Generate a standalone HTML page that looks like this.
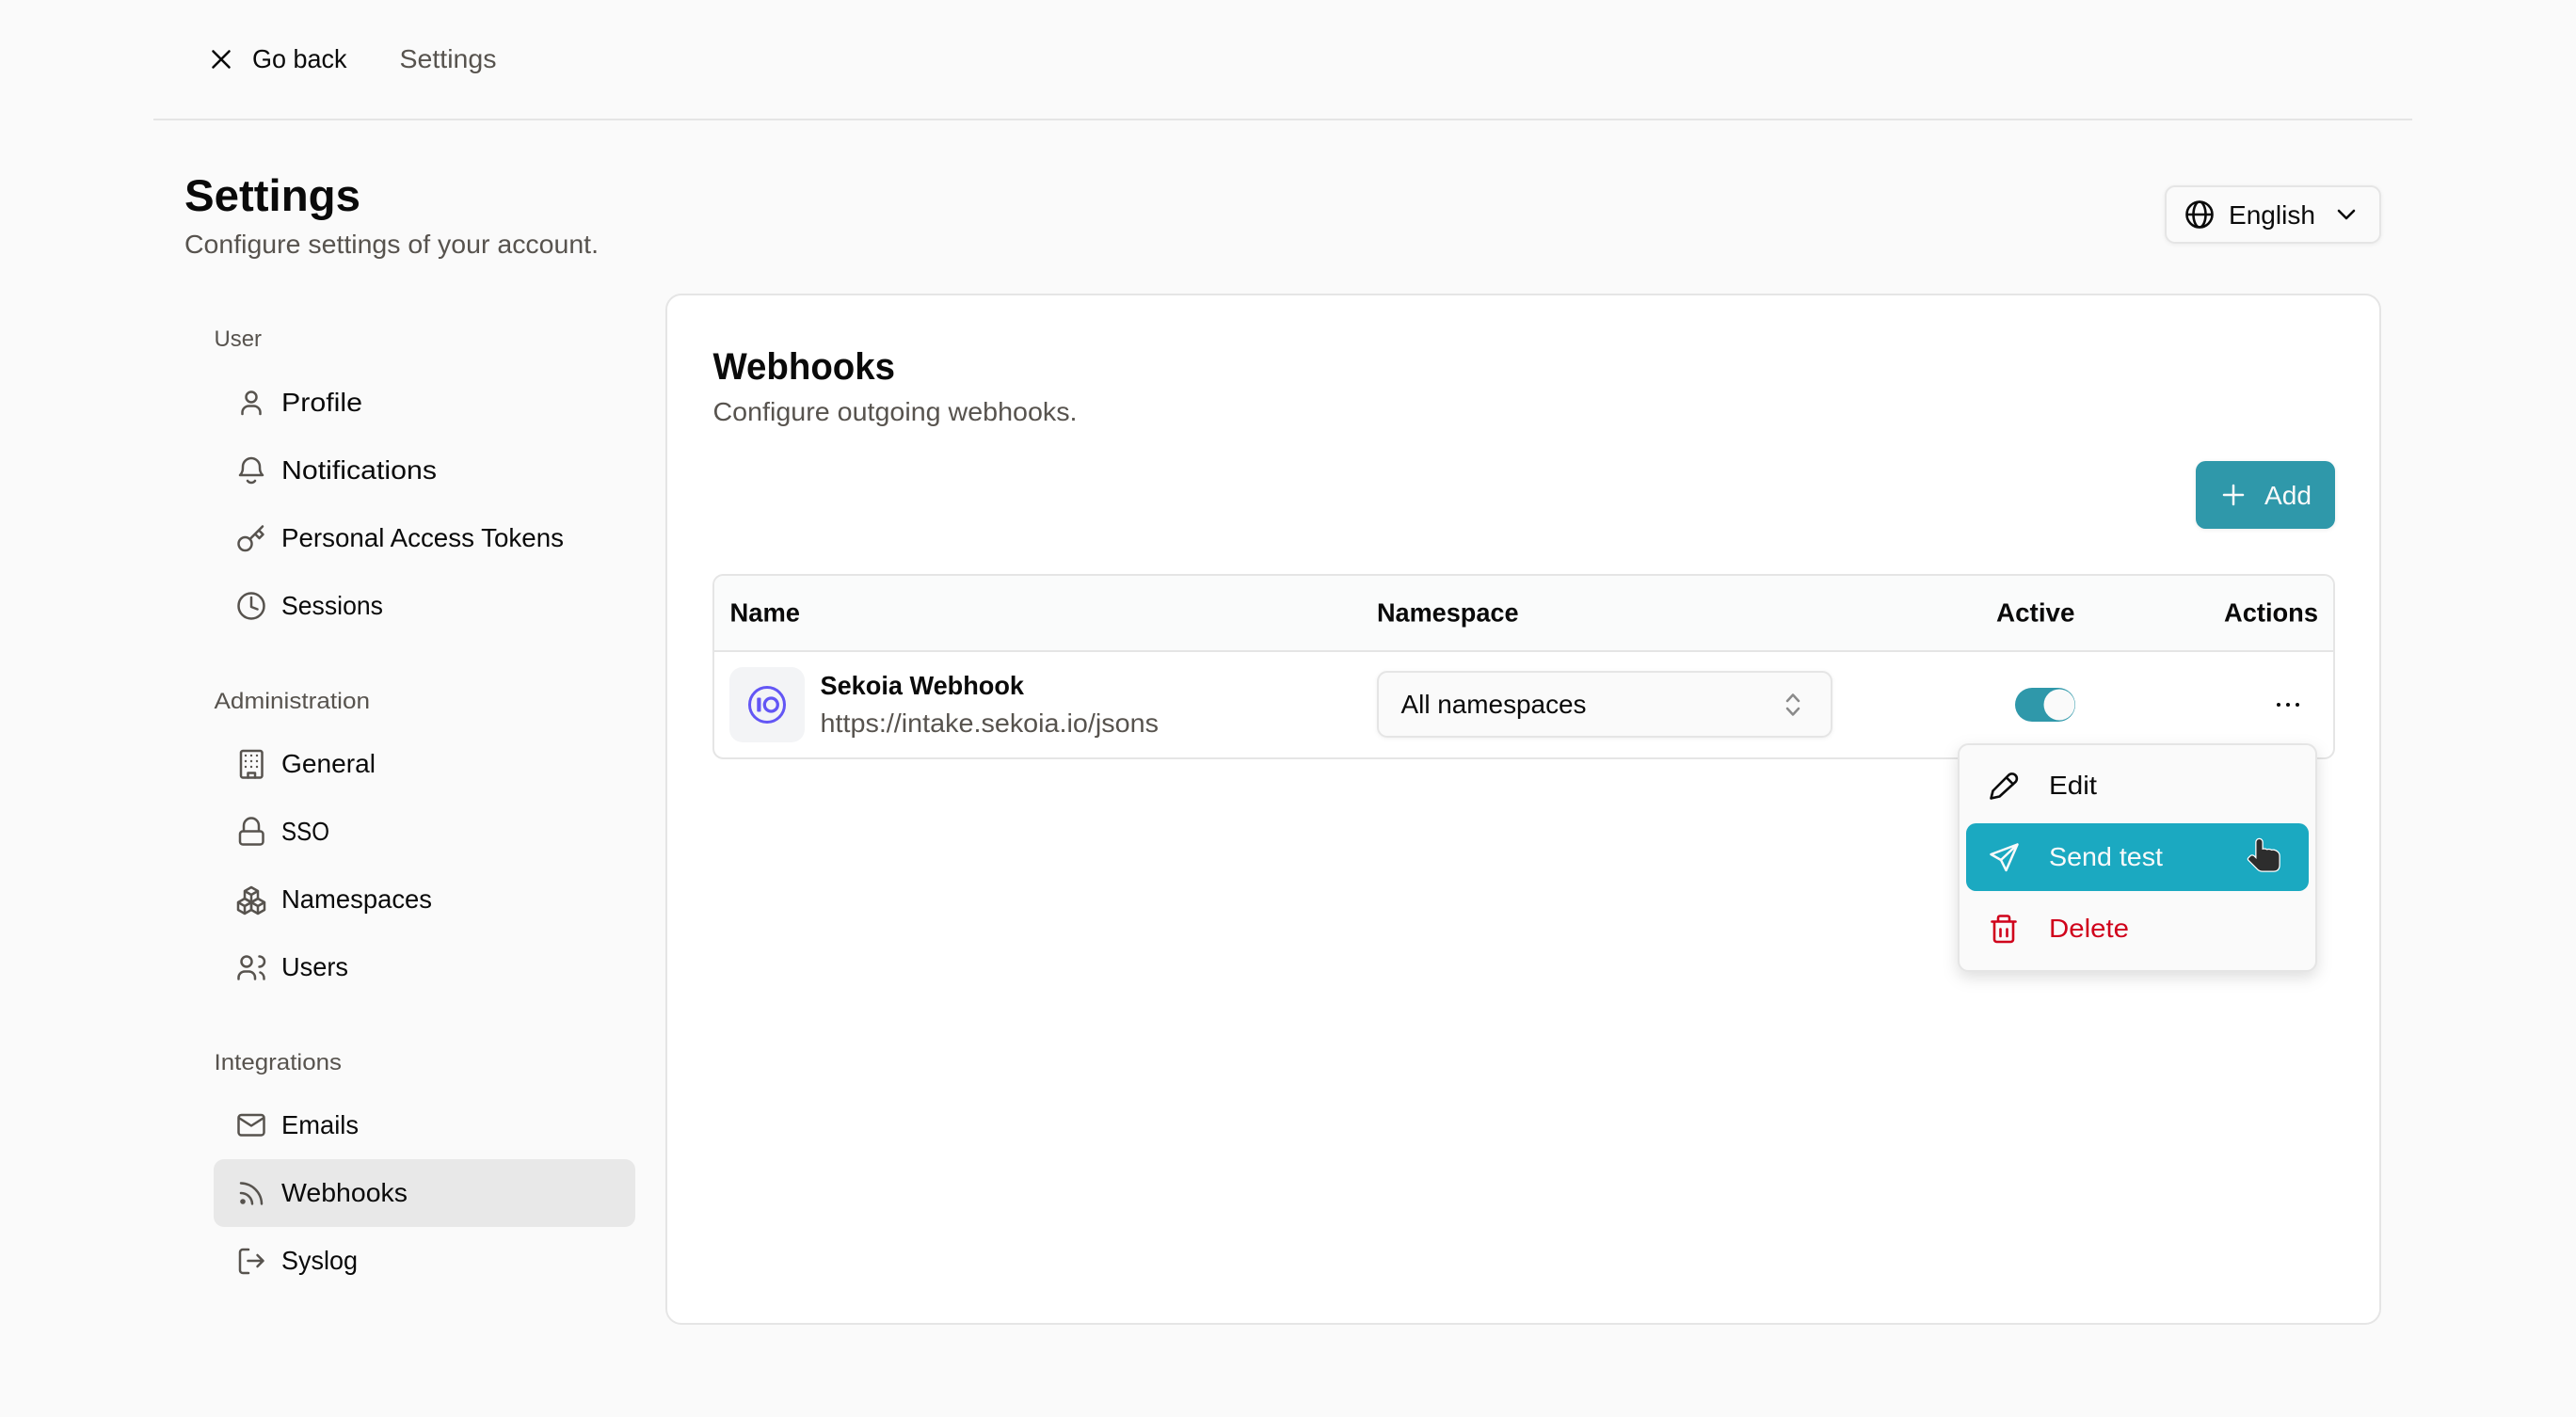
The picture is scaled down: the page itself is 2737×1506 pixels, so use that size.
<!DOCTYPE html>
<html lang="en">
<head>
<meta charset="utf-8">
<title>Settings</title>
<style>
html,body{margin:0;padding:0;background:#fafafa;width:2737px;height:1506px;overflow:hidden}
svg{display:block}
text{font-family:"Liberation Sans",sans-serif;font-size:27.5px;fill:#0a0a0a;white-space:pre}
.s{fill:#57534e}
.l{font-size:24.5px;fill:#57534e}
.b{font-weight:700}
.i{fill:none;stroke:#57534e;stroke-width:2.5;stroke-linecap:round;stroke-linejoin:round}
.k{fill:none;stroke:#0a0a0a;stroke-width:2.6;stroke-linecap:round;stroke-linejoin:round}
</style>
</head>
<body>
<svg xmlns="http://www.w3.org/2000/svg" width="2737" height="1506" viewBox="0 0 2737 1506">
<rect width="2737" height="1506" fill="#fafafa"/>

<!-- Top bar -->
<path class="k" d="M226.500 54.500L243.500 71.500M243.500 54.500L226.500 71.500"/>
<text x="268" y="72" textLength="100.500" lengthAdjust="spacingAndGlyphs">Go back</text>
<text class="s" x="424.500" y="72" textLength="103" lengthAdjust="spacingAndGlyphs">Settings</text>
<rect x="163" y="126" width="2400" height="2" fill="#e5e5e5"/>

<!-- Title -->
<text class="b" x="196" y="224" style="font-size:47px" textLength="187" lengthAdjust="spacingAndGlyphs">Settings</text>
<text class="s" x="196" y="269" textLength="440" lengthAdjust="spacingAndGlyphs">Configure settings of your account.</text>

<!-- Language -->
<rect x="2301" y="198" width="228" height="60" rx="10" fill="#fafafa" stroke="#e5e5e5" stroke-width="2" style="filter:drop-shadow(0 1px 2px rgba(0,0,0,.06))"/>
<g class="k"><circle cx="2337" cy="228" r="13.500"/><ellipse cx="2337" cy="228" rx="6.500" ry="13.500"/><path d="M2324 228H2350"/></g>
<text x="2368" y="238" textLength="92" lengthAdjust="spacingAndGlyphs">English</text>
<path class="k" d="M2485 224L2493 232L2501 224"/>

<!-- Sidebar -->
<text class="l" x="227.500" y="368" textLength="50.500" lengthAdjust="spacingAndGlyphs">User</text>
<text x="299" y="437" textLength="86" lengthAdjust="spacingAndGlyphs">Profile</text>
<text x="299" y="509" textLength="165" lengthAdjust="spacingAndGlyphs">Notifications</text>
<text x="299" y="581" textLength="300" lengthAdjust="spacingAndGlyphs">Personal Access Tokens</text>
<text x="299" y="653" textLength="108" lengthAdjust="spacingAndGlyphs">Sessions</text>

<text class="l" x="227.500" y="753" textLength="165.500" lengthAdjust="spacingAndGlyphs">Administration</text>
<text x="299" y="821" textLength="100" lengthAdjust="spacingAndGlyphs">General</text>
<text x="299" y="893" textLength="51" lengthAdjust="spacingAndGlyphs">SSO</text>
<text x="299" y="965" textLength="160" lengthAdjust="spacingAndGlyphs">Namespaces</text>
<text x="299" y="1037" textLength="71" lengthAdjust="spacingAndGlyphs">Users</text>

<text class="l" x="227.500" y="1137" textLength="135.500" lengthAdjust="spacingAndGlyphs">Integrations</text>
<rect x="227" y="1232" width="448" height="72" rx="11" fill="#e8e8e8"/>
<text x="299" y="1205" textLength="82" lengthAdjust="spacingAndGlyphs">Emails</text>
<text x="299" y="1277" textLength="134" lengthAdjust="spacingAndGlyphs">Webhooks</text>
<text x="299" y="1349" textLength="81" lengthAdjust="spacingAndGlyphs">Syslog</text>

<!-- Sidebar icons -->
<g class="i">
  <!-- user -->
  <circle cx="267" cy="422" r="5.500"/>
  <path d="M257.500 440V438.500A7 7 0 0 1 264.500 431.500H269.500A7 7 0 0 1 276.500 438.500V440"/>
  <!-- bell -->
  <path d="M255 505C258 502 258 499 258 496A9 9 0 0 1 276 496C276 499 276 502 279 505H255Z"/>
  <path d="M263 511A5 5 0 0 0 271 511"/>
  <!-- key -->
  <circle cx="260.500" cy="578" r="7"/>
  <path d="M265.500 573L279 559.500M271 567.500L275.500 572L279.500 568L275 563.500"/>
  <!-- clock -->
  <circle cx="267" cy="644" r="13.500"/>
  <path d="M267 635V645L273.500 647.500"/>
  <!-- building -->
  <rect x="256" y="798" width="22.500" height="28.500" rx="2"/>
  <path d="M263.500 826.500V821.500H271V826.500"/>
  <!-- lock -->
  <rect x="255" y="883.500" width="24.500" height="14" rx="3"/>
  <path d="M259 883V877.500A8 8 0 0 1 275 877.500V883"/>
  <!-- namespaces -->
  <path d="M267 943L274 947V955L267 959L260 955V947ZM260 947L267 951L274 947M267 951V959"/>
  <path d="M260 955L267 959V967L260 971L253 967V959ZM253 959L260 963L267 959M260 963V971"/>
  <path d="M274 955L281 959V967L274 971L267 967V959ZM267 959L274 963L281 959M274 963V971"/>
  <!-- users -->
  <circle cx="262" cy="1022" r="5.500"/>
  <path d="M253.500 1040.500V1039A6.500 6.500 0 0 1 260 1032.500H264.500A6.500 6.500 0 0 1 271 1039V1040.500"/>
  <path d="M275.500 1016.500A5.500 5.500 0 0 1 275.500 1027.500M280.500 1040.500V1039.500A6.500 6.500 0 0 0 276.500 1033.500"/>
  <!-- mail -->
  <rect x="253.500" y="1185" width="27" height="21.500" rx="3"/>
  <path d="M254.500 1188.500L267 1196.500L279.500 1188.500"/>
  <!-- rss -->
  <path d="M256 1268A12 12 0 0 1 268 1279.500M256 1257.500A22.500 22.500 0 0 1 278 1279.500"/>
  <!-- logout -->
  <path d="M264 1328H258A3 3 0 0 0 255 1331V1350A3 3 0 0 0 258 1353H264"/>
  <path d="M263.500 1340H279.500M273.500 1334L279.500 1340L273.500 1346"/>
</g>
<circle cx="258" cy="1277" r="2.800" fill="#57534e"/>
<g fill="#57534e">
  <circle cx="261" cy="803" r="1.200"/><circle cx="267" cy="803" r="1.200"/><circle cx="273" cy="803" r="1.200"/>
  <circle cx="261" cy="809" r="1.200"/><circle cx="267" cy="809" r="1.200"/><circle cx="273" cy="809" r="1.200"/>
  <circle cx="261" cy="815" r="1.200"/><circle cx="267" cy="815" r="1.200"/><circle cx="273" cy="815" r="1.200"/>
</g>

<!-- Main card -->
<rect x="708" y="313" width="1821" height="1094" rx="16" fill="#ffffff" stroke="#e5e5e5" stroke-width="2"/>
<text class="b" x="757.500" y="403" style="font-size:40px" textLength="193.500" lengthAdjust="spacingAndGlyphs">Webhooks</text>
<text class="s" x="757.500" y="447" textLength="387" lengthAdjust="spacingAndGlyphs">Configure outgoing webhooks.</text>

<!-- Add -->
<rect x="2333" y="490" width="148" height="72" rx="10.500" fill="#2f98aa" style="filter:drop-shadow(0 1px 2px rgba(0,0,0,.08))"/>
<path d="M2373 516V536M2363 526H2383" fill="none" stroke="#fafafa" stroke-width="2.500" stroke-linecap="round"/>
<text x="2406" y="536" style="fill:#fafafa" textLength="50" lengthAdjust="spacingAndGlyphs">Add</text>

<!-- Table -->
<rect x="758" y="611" width="1722" height="195" rx="10.500" fill="#ffffff" stroke="#e5e5e5" stroke-width="2"/>
<path d="M759 692V622.500A10.500 10.500 0 0 1 769.500 612H2468.500A10.500 10.500 0 0 1 2479 622.500V692Z" fill="#fafbfb"/>
<rect x="758" y="691" width="1722" height="2" fill="#e5e5e5"/>
<text class="b" x="775.500" y="660.500" textLength="74.500" lengthAdjust="spacingAndGlyphs">Name</text>
<text class="b" x="1463" y="660.500" textLength="150.500" lengthAdjust="spacingAndGlyphs">Namespace</text>
<text class="b" x="2121" y="660.500" textLength="83.500" lengthAdjust="spacingAndGlyphs">Active</text>
<text class="b" x="2363" y="660.500" textLength="100" lengthAdjust="spacingAndGlyphs">Actions</text>

<!-- Row -->
<rect x="775" y="709" width="80" height="80" rx="14" fill="#f3f4f6"/>
<circle cx="815" cy="749" r="18.500" fill="none" stroke="#6356f5" stroke-width="3"/>
<rect x="804.300" y="741.500" width="4.200" height="15" rx="1" fill="#6356f5"/>
<circle cx="819.300" cy="749" r="7" fill="none" stroke="#6356f5" stroke-width="3.300"/>
<text class="b" x="871.500" y="738" textLength="216.500" lengthAdjust="spacingAndGlyphs">Sekoia Webhook</text>
<text class="s" x="871.500" y="778" textLength="359.500" lengthAdjust="spacingAndGlyphs">https://intake.sekoia.io/jsons</text>

<!-- Select -->
<rect x="1464" y="714" width="482" height="69" rx="10" fill="#fafafa" stroke="#e5e5e5" stroke-width="2" style="filter:drop-shadow(0 1px 2px rgba(0,0,0,.06))"/>
<text x="1488.500" y="758" textLength="197" lengthAdjust="spacingAndGlyphs">All namespaces</text>
<path d="M1899 745L1905 738.500L1911 745M1899 753L1905 759.500L1911 753" fill="none" stroke="#8a8a8a" stroke-width="2.500" stroke-linecap="round" stroke-linejoin="round"/>

<!-- Toggle -->
<rect x="2141" y="731" width="64" height="36" rx="18" fill="#2f98aa"/>
<circle cx="2188" cy="749" r="16.500" fill="#fafafa"/>

<!-- Dots -->
<circle cx="2421" cy="749" r="2" fill="#0a0a0a"/>
<circle cx="2431" cy="749" r="2" fill="#0a0a0a"/>
<circle cx="2441" cy="749" r="2" fill="#0a0a0a"/>

<!-- Menu -->
<rect x="2081" y="791" width="380" height="241" rx="10.500" fill="#fafafa" stroke="#e5e5e5" stroke-width="2" style="filter:drop-shadow(0 6px 8px rgba(0,0,0,.13))"/>
<path class="k" d="M2115.500 848.500L2117.500 840.500L2134 824A4.500 4.500 0 0 1 2141.500 831L2124.500 846.500ZM2132 826.500L2139 833.500"/>
<text x="2177" y="844" textLength="51" lengthAdjust="spacingAndGlyphs">Edit</text>

<rect x="2089" y="875" width="364" height="72" rx="10.500" fill="#1ba9c1"/>
<path d="M2143.500 897.500L2115.500 908L2126 914L2131.500 925ZM2143.500 897.500L2126 914" fill="none" stroke="#fafafa" stroke-width="2.500" stroke-linejoin="round" stroke-linecap="round"/>
<text x="2177" y="920" style="fill:#fafafa" textLength="121" lengthAdjust="spacingAndGlyphs">Send test</text>

<path d="M2116.500 979.500H2141.500M2123 979V975.500A2 2 0 0 1 2125 973.500H2133A2 2 0 0 1 2135 975.500V979M2119 980V998.500A2.500 2.500 0 0 0 2121.500 1001H2136.500A2.500 2.500 0 0 0 2139 998.500V980M2125.500 987.500V995M2132.500 987.500V995" fill="none" stroke="#d0021b" stroke-width="2.600" stroke-linecap="round" stroke-linejoin="round"/>
<text x="2177" y="996" style="fill:#d0021b" textLength="85" lengthAdjust="spacingAndGlyphs">Delete</text>

<!-- Cursor -->
<path d="M2397.500 895A3 3 0 0 1 2403.500 895V903Q2406.500 902 2408.500 903.500Q2411.500 902.500 2413.500 904Q2416.500 903 2419.500 905.500Q2421.500 907 2421.500 910V919Q2421.500 925.500 2415.500 925.500H2404Q2401 925.500 2399 923.500L2389.500 914Q2388.500 913 2389.500 912L2391.500 910Q2392.500 909 2394.500 910L2397.500 913Z" fill="#2d2d2d" stroke="#ffffff" stroke-width="2.500" stroke-linejoin="round" paint-order="stroke"/>
</svg>
</body>
</html>
